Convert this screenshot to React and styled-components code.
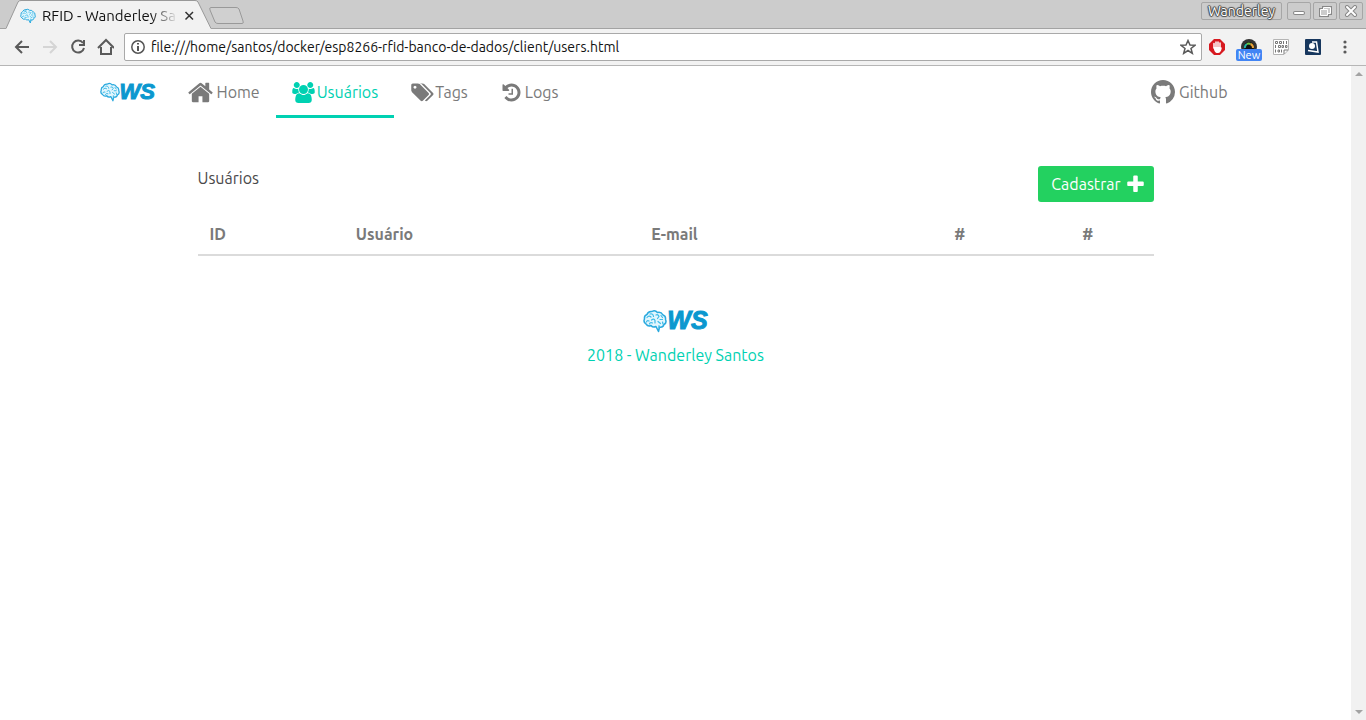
import React from "react";
import styled, { createGlobalStyle, css } from "styled-components";

const Global = createGlobalStyle`
  * { box-sizing: border-box; }
  body { margin: 0; background: #fff; color: #4a4a4a; font: 16px/24px Ubuntu, "Noto Sans", sans-serif; }
  a { color: inherit; text-decoration: none; }
  button { font: inherit; border: 0; padding: 0; background: none; color: inherit; }
`;

const Browser = styled.div`display: flex; flex-direction: column; min-height: 100vh;`;

const TabStrip = styled.div`
  display: flex; align-items: flex-start; height: 29px; padding-left: 6px;
  background: #ccc; box-shadow: inset 0 -1px #a3a3a3;
`;
const PageTab = styled.div`
  position: relative; flex: none; width: 205px; height: 29px; padding: 2px 16px 0 14px;
  display: flex; align-items: center; gap: 6px; color: #111; font-size: 15px;
`;
const TabShape = styled.svg`position: absolute; left: 0; top: 0; z-index: 0;`;
const TabTitle = styled.span`
  position: relative; flex: 1; white-space: nowrap;
  mask-image: linear-gradient(90deg, #000 80%, transparent);
`;
const TabIcon = styled.span`position: relative; display: flex;`;
const TabClose = styled.button`position: relative; display: flex; width: 11px;`;
const NewTab = styled.button`display: flex; padding-top: 7px; margin-left: -2px;`;
const WindowControls = styled.div`display: flex; gap: 2px; margin-left: auto; padding: 2px 3px 0 0;`;
const WindowButton = styled.button`
  display: flex; align-items: center; justify-content: center; height: 18px;
  width: ${(p) => (p.$wide ? 81 : 24)}px; margin-right: ${(p) => (p.$wide ? 3 : 0)}px;
  border: 1px solid #a6a6a6; border-radius: 2px; color: #fff; font-size: 14px; line-height: 16px;
  text-shadow: 0 0 1px #333, 0 0 1px #333, 1px 0 1px #555, -1px 0 1px #555, 0 1px 1px #555, 0 -1px 1px #555;
`;

const Toolbar = styled.div`
  display: flex; align-items: center; height: 37px; padding: 0 13px 0 12px;
  background: #f2f2f2; border-bottom: 1px solid #b6b6b6;
`;
const ToolButton = styled.button`display: flex; flex: none; width: 18px; margin-right: 10px; justify-content: center;`;
const AddressBar = styled.label`
  display: flex; align-items: center; flex: 1; height: 28px; padding: 0 5px; gap: 5px;
  background: #fff; border: 1px solid #a9a9a9; border-radius: 2px;
`;
const Address = styled.input`
  flex: 1; min-width: 0; border: 0; padding: 0; outline: 0; background: none; color: #111;
  font: 14px/20px Ubuntu, "Noto Sans", sans-serif;
`;
const Extensions = styled.div`display: flex; align-items: center; gap: 16px; margin-left: 7px;`;
const Extension = styled.button`position: relative; display: flex; width: 16px; justify-content: center;`;
const NewBadge = styled.span`
  position: absolute; left: -5px; top: 10px; width: 26px; height: 12px; border-radius: 2px;
  background: #4285f4; color: #fff; font-size: 11px; line-height: 13px; text-align: center;
`;

const Viewport = styled.div`display: flex; flex: 1;`;
const Page = styled.div`flex: 1; min-width: 0;`;
const Scrollbar = styled.div`
  display: flex; flex-direction: column; justify-content: space-between; align-items: center;
  width: 15px; padding: 6px 0; background: #f1f1f1;
`;

const Navbar = styled.nav`
  display: flex; align-items: stretch; max-width: 1152px; height: 52px; margin: 0 auto;
`;
const NavLogo = styled.a`display: flex; align-items: center; width: 73px;`;
const NavItem = styled.a`
  display: flex; align-items: center; gap: ${(p) => (p.$spaced ? 4 : 1)}px; padding: 0 16px; color: #7a7a7a;
  border-bottom: 3px solid transparent; border-top: 3px solid transparent;
  ${(p) => p.$active && css`color: #00d1b2; border-bottom-color: #00d1b2;`}
`;
const NavEnd = styled.div`display: flex; margin-left: auto; padding-right: 8px;`;
const IconBox = styled.span`
  display: flex; align-items: center; justify-content: center; width: 24px; height: 24px;
  svg { flex: none; }
`;

const Main = styled.main`max-width: 956px; margin: 48px auto 0;`;
const Heading = styled.div`display: flex; justify-content: space-between; align-items: flex-start; margin-bottom: 12px;`;
const Title = styled.h1`margin: 0; font-size: 16px; font-weight: 400; line-height: 24px;`;
const AddButton = styled.button`
  display: flex; align-items: center; gap: 3px; height: 36px; padding: 0 6px 0 13px;
  background: #23d160; color: #fff; border-radius: 3px;
`;
const Table = styled.table`width: 100%; border-collapse: collapse; table-layout: fixed;`;
const HeadCell = styled.th`
  width: ${(p) => p.$width}; padding: 8px 12px; text-align: left; color: #7a7a7a;
  font-weight: 700; border-bottom: 2px solid #dbdbdb;
`;
const Footer = styled.footer`
  display: flex; flex-direction: column; align-items: center; gap: 10px; padding-top: 52px; color: #00d1b2;
`;

const Brand = styled.span`
  display: flex; align-items: center; color: #0b98cf; line-height: ${(p) => p.$size}px;
  font-family: "Liberation Sans", Arial, sans-serif; font-size: ${(p) => p.$size}px;
  font-weight: 700; font-style: italic; -webkit-text-stroke: 1px #0b98cf;
`;

const Brain = ({ size }) => (
  <svg width={size} height={size} viewBox="0 0 24 24" fill="none" stroke="#3dbbe9" strokeWidth="1.2" strokeLinecap="round" strokeLinejoin="round">
    <path d="M9 2.500Q5 2 4 5.500Q1 6.500 1.500 10Q0 13 3 15Q5 18 8 16.500Q10 19 13 17.500L15.500 22.500L16.500 18Q20 19 21 15.500Q24 14 22.500 10.500Q23 7 20 6Q18 2.500 14.500 3.500Q12 .5 9 2.500Z" fill="#e3f6fd" stroke="#2aa9de" strokeWidth="1.500" />
    <path d="M4 8.500Q6 6 8 8M6 12Q4 11 3.500 13M7 5Q10 4 10.500 7.500M8.500 11Q11 9 12 11.500V14M6.500 15Q7 13 9.500 14M13 6Q15 5 16 7.500L14.500 9.500M17 10.500H19.500M18 6.500L19.500 8.500M15 12.500L17.500 14.500M19.500 13L20 15M16 16.500V19" />
  </svg>
);
const Logo = ({ size, brain }) => <Brand $size={size}><Brain size={brain} />WS</Brand>;

const shapes = {
  home: [1792, "M1472 992v480q0 26-19 45t-45 19h-384v-384h-256v384h-384q-26 0-45-19t-19-45v-480q0-1 .5-3t.5-3l575-474 575 474q1 2 1 6zm223-69l-62 74q-8 9-21 11h-3q-13 0-21-7l-692-577-692 577q-12 8-24 7-13-2-21-11l-62-74q-8-10-7-23.500t11-21.500l719-599q32-26 76-26t76 26l244 204v-195q0-14 9-23t23-9h192q14 0 23 9t9 23v408l219 182q10 8 11 21.500t-7 23.500z"],
  users: [1920, "M593 896q-162 5-265 128H194q-82 0-138-40.500T0 865q0-353 124-353 6 0 43.500 21t97.500 42.500T384 597q67 0 133-23-5 37-5 66 0 139 81 256zm1071 637q0 120-73 189.500t-194 69.500H523q-121 0-194-69.500T256 1533q0-53 3.500-103.500t14-109T300 1212t43-97.500 62-81 85.500-53.500T602 960q10 0 43 21.500t73 48 107 48T960 1099t135-21.500 107-48 73-48 43-21.500q61 0 111.500 20t85.500 53.500 62 81 43 97.500 26.500 108.500 14 109 3.500 103.500zM640 256q0 106-75 181t-181 75-181-75-75-181 75-181T384 0t181 75 75 181zm704 384q0 159-112.500 271.500T960 1024 688.500 911.500 576 640t112.500-271.500T960 256t271.500 112.500T1344 640zm576 225q0 78-56 118.500t-138 40.500h-134q-103-123-265-128 81-117 81-256 0-29-5-66 66 23 133 23 59 0 119-21.500t97.500-42.500 43.500-21q124 0 124 353zm-128-609q0 106-75 181t-181 75-181-75-75-181 75-181 181-75 181 75 75 181z"],
  tags: [1920, "M448 448q0-53-37.500-90.500t-90.500-37.500-90.500 37.500-37.500 90.500 37.500 90.500 90.500 37.500 90.500-37.500 37.500-90.500zm1067 576q0 53-37 90l-491 492q-39 37-91 37-53 0-90-37l-715-716q-38-37-64.500-101t-26.500-117v-416q0-52 38-90t90-38h416q53 0 117 26.500t102 64.500l715 714q37 39 37 91zm384 0q0 53-37 90l-491 492q-39 37-91 37-36 0-59-14t-53-45l470-470q37-37 37-90 0-52-37-91l-715-714q-38-38-102-64.500t-117-26.500h224q53 0 117 26.500t102 64.500l715 714q37 39 37 91z"],
  history: [1792, "M1664 896q0 156-61 298t-164 245-245 164-298 61q-172 0-327-72.500t-264-204.500q-7-10-6.500-22.500t8.500-20.500l137-138q10-9 25-9 16 2 23 12 73 95 179 147t225 52q104 0 198.500-40.500t163.500-109.500 109.500-163.500 40.500-198.500-40.500-198.500-109.500-163.500-163.500-109.500-198.500-40.500q-98 0-188 35.500t-160 101.500l137 138q31 30 14 69-17 40-59 40h-448q-26 0-45-19t-19-45v-448q0-42 40-59 39-17 69 14l130 129q107-101 244.500-156.500t284.500-55.500q156 0 298 61t245 164 164 245 61 298zm-640-288v448q0 14-9 23t-23 9h-320q-14 0-23-9t-9-23v-64q0-14 9-23t23-9h224v-352q0-14 9-23t23-9h64q14 0 23 9t9 23z"],
  plus: [1792, "M1600 736v192q0 40-28 68t-68 28h-416v416q0 40-28 68t-68 28h-192q-40 0-68-28t-28-68v-416h-416q-40 0-68-28t-28-68v-192q0-40 28-68t68-28h416v-416q0-40 28-68t68-28h192q40 0 68 28t28 68v416h416q40 0 68 28t28 68z"],
};
const Icon = ({ name, size = 21 }) => {
  const [w, d] = shapes[name];
  return (
    <IconBox>
      <svg height={size} width={Math.round((size * w) / 1792)} viewBox={`0 0 ${w} 1792`} fill="currentColor"><path d={d} /></svg>
    </IconBox>
  );
};
const Octocat = () => (
  <svg width="24" height="24" viewBox="0 0 16 16" fill="currentColor">
    <path d="M8 0C3.580 0 0 3.580 0 8c0 3.540 2.290 6.530 5.470 7.590.4.070.55-.17.55-.38 0-.19-.01-.82-.01-1.490-2.010.37-2.530-.49-2.690-.94-.09-.23-.48-.94-.82-1.130-.28-.15-.68-.52-.01-.53.63-.01 1.080.58 1.230.82.72 1.210 1.870.87 2.330.66.07-.52.28-.87.51-1.070-1.780-.2-3.640-.89-3.640-3.950 0-.87.31-1.590.82-2.150-.08-.2-.36-1.020.08-2.120 0 0 .67-.21 2.200.82.64-.18 1.320-.27 2-.27s1.360.09 2 .27c1.530-1.040 2.200-.82 2.200-.82.44 1.100.16 1.920.08 2.120.51.56.82 1.270.82 2.150 0 3.070-1.870 3.750-3.650 3.950.29.25.54.73.54 1.480 0 1.070-.01 1.930-.01 2.200 0 .21.15.46.55.38A8.010 8.010 0 0 0 16 8c0-4.420-3.580-8-8-8z" />
  </svg>
);
const Line = ({ d, size = 18, color = "#5a5a5a", width = 2 }) => (
  <svg width={size} height={size} viewBox={`0 0 ${size} ${size}`} fill="none" stroke={color} strokeWidth={width}><path d={d} /></svg>
);
const Glyph = ({ d }) => (
  <svg width="14" height="12" viewBox="0 0 14 12" fill="none">
    <path d={d} stroke="#888" strokeWidth="4" strokeLinecap="round" strokeLinejoin="round" />
    <path d={d} stroke="#fff" strokeWidth="2" strokeLinecap="round" />
  </svg>
);

const columns = [["ID", "15.3%"], ["Usuário", "30.9%"], ["E-mail", "31.7%"], ["#", "13.4%"], ["#", "8.7%"]];

export default function App() {
  return (
    <Browser>
      <Global />
      <TabStrip>
        <PageTab>
          <TabShape width="205" height="29" viewBox="0 0 205 29">
            <path d="M0 28.500 12 2Q13 .5 15 .5H189Q191 .5 192 2L205 28.500V29H0Z" fill="#f2f2f2" />
            <path d="M0 28.500 12 2Q13 .5 15 .5H189Q191 .5 192 2L205 28.500" fill="none" stroke="#999" />
          </TabShape>
          <TabIcon><Brain size={16} /></TabIcon>
          <TabTitle>RFID - Wanderley Sa</TabTitle>
          <TabClose aria-label="Fechar aba"><Line size={11} width={1.5} color="#333" d="M1.500 2 9 9.500M9 2 1.500 9.500" /></TabClose>
        </PageTab>
        <NewTab aria-label="Nova aba">
          <svg width="36" height="18" viewBox="0 0 36 18"><path d="M2 .5H27Q29 .5 30 2L34 14Q35 16.500 33 16.500H9Q7 16.500 6 15L1 3Q0 .5 2 .5Z" fill="#d0d0d0" stroke="#999" /></svg>
        </NewTab>
        <WindowControls>
          <WindowButton $wide>Wanderley</WindowButton>
          <WindowButton aria-label="Minimizar"><Glyph d="M3 8H11" /></WindowButton>
          <WindowButton aria-label="Restaurar">
            <svg width="13" height="11" viewBox="0 0 13 11" fill="none">
              <path d="M4.500 3.500V1.500H11.500V7.500H8.500M1.500 3.500H8.500V9.500H1.500Z" stroke="#888" strokeWidth="3" />
              <path d="M4.500 3.500V1.500H11.500V7.500H8.500M1.500 3.500H8.500V9.500H1.500Z" fill="#ccc" stroke="#fff" />
            </svg>
          </WindowButton>
          <WindowButton aria-label="Fechar"><Glyph d="M3 2 11 10M11 2 3 10" /></WindowButton>
        </WindowControls>
      </TabStrip>
      <Toolbar>
        <ToolButton aria-label="Voltar"><Line d="M17 9H4M10 3 4 9 10 15" /></ToolButton>
        <ToolButton aria-label="Avançar"><Line color="#d5d5d5" d="M3 9H16M10 3 16 9 10 15" /></ToolButton>
        <ToolButton aria-label="Recarregar"><Line d="M15 5A6 6 0 1 0 16 10M16 2V7H11" /></ToolButton>
        <ToolButton aria-label="Início"><Line d="M2 10 10 2 18 10M5 9V16H15V9" /></ToolButton>
        <AddressBar>
          <svg width="16" height="16" viewBox="0 0 16 16" fill="none" stroke="#555" strokeWidth="1.5"><circle cx="8" cy="8" r="6.200" /><path d="M8 7V12M8 4V5.500" strokeWidth="2" /></svg>
          <Address aria-label="Endereço" defaultValue="file:///home/santos/docker/esp8266-rfid-banco-de-dados/client/users.html" />
          <Line size={16} width={1.5} d="M8 1.500 10 6 15 6.300 11 9.500 12.300 14.300 8 11.500 3.700 14.300 5 9.500 1 6.300 6 6Z" />
        </AddressBar>
        <Extensions>
          <Extension aria-label="Bloqueador">
            <svg width="16" height="16" viewBox="0 0 16 16"><path d="M5 0H11L16 5V11L11 16H5L0 11V5Z" fill="#d71920" /><path d="M5 9V4.500M7 8V3M9 8V3M11 9V4" stroke="#fff" strokeWidth="1.500" strokeLinecap="round" /><path d="M4.500 8H11.500L12 9 13 8Q12 14 9 14H7.500Q5 13 4.500 8Z" fill="#fff" /></svg>
          </Extension>
          <Extension aria-label="Câmera">
            <svg width="16" height="16" viewBox="0 0 16 16"><circle cx="8" cy="8" r="8" fill="#333" /><circle cx="8" cy="8" r="5" fill="#111" /><path d="M4 9A4 4 0 0 1 6 5" stroke="#25b8a0" strokeWidth="2" fill="none" /><path d="M6 5A4 4 0 0 1 9.500 5" stroke="#6cc644" strokeWidth="2" fill="none" /><path d="M9.500 5A4 4 0 0 1 12 9" stroke="#e9a33a" strokeWidth="2" fill="none" /></svg>
            <NewBadge>New</NewBadge>
          </Extension>
          <Extension aria-label="Binário">
            <svg width="16" height="16" viewBox="0 0 16 16" fill="none" stroke="#777">
              <path d="M.5 .5H15.500V11L11 15.500H.5Z" fill="#fff" stroke="#b4b4b4" />
              <path d="M11 15V11H15" />
              <path d="M2.500 2.500H4.500V4.500H2.500ZM6.500 2.500H8.500V4.500H6.500ZM10.500 2V5M13.500 2V5M2.500 6V9M5.500 6.500H7.500V8.500H5.500ZM9 6.500H10.500V8.500H9ZM12.500 6.500H14V8.500H12.500ZM2.500 10.500V13.500M5 11H6.500V13H5ZM8.500 10.500V13.500" />
            </svg>
          </Extension>
          <Extension aria-label="Leitor">
            <svg width="16" height="16" viewBox="0 0 16 16"><rect width="16" height="16" rx="1" fill="#17375e" /><path d="M7 3H11.500L13 13 3 11.500" fill="none" stroke="#fff" strokeWidth="1.500" /><circle cx="7" cy="7" r="3" fill="#fff" /></svg>
          </Extension>
          <Extension aria-label="Menu">
            <svg width="4" height="14" viewBox="0 0 4 14" fill="#5a5a5a"><circle cx="2" cy="2" r="1.600" /><circle cx="2" cy="7" r="1.600" /><circle cx="2" cy="12" r="1.600" /></svg>
          </Extension>
        </Extensions>
      </Toolbar>
      <Viewport>
        <Page>
          <Navbar>
            <NavLogo href="#" aria-label="WS"><Logo size={22} brain={20} /></NavLogo>
            <NavItem href="#" $spaced><Icon name="home" size={27} />Home</NavItem>
            <NavItem href="#" $active><Icon name="users" />Usuários</NavItem>
            <NavItem href="#"><Icon name="tags" />Tags</NavItem>
            <NavItem href="#"><Icon name="history" />Logs</NavItem>
            <NavEnd><NavItem href="#" $spaced><Octocat />Github</NavItem></NavEnd>
          </Navbar>
          <Main>
            <Heading>
              <Title>Usuários</Title>
              <AddButton>Cadastrar<Icon name="plus" /></AddButton>
            </Heading>
            <Table>
              <thead><tr>{columns.map(([label, width], i) => <HeadCell key={i} $width={width}>{label}</HeadCell>)}</tr></thead>
            </Table>
          </Main>
          <Footer>
            <Logo size={25} brain={24} />
            <a href="#">2018 - Wanderley Santos</a>
          </Footer>
        </Page>
        <Scrollbar>
          <svg width="8" height="4" viewBox="0 0 8 4" fill="#a3a3a3"><path d="M0 4 4 0 8 4Z" /></svg>
          <svg width="8" height="4" viewBox="0 0 8 4" fill="#a3a3a3"><path d="M0 0 4 4 8 0Z" /></svg>
        </Scrollbar>
      </Viewport>
    </Browser>
  );
}
